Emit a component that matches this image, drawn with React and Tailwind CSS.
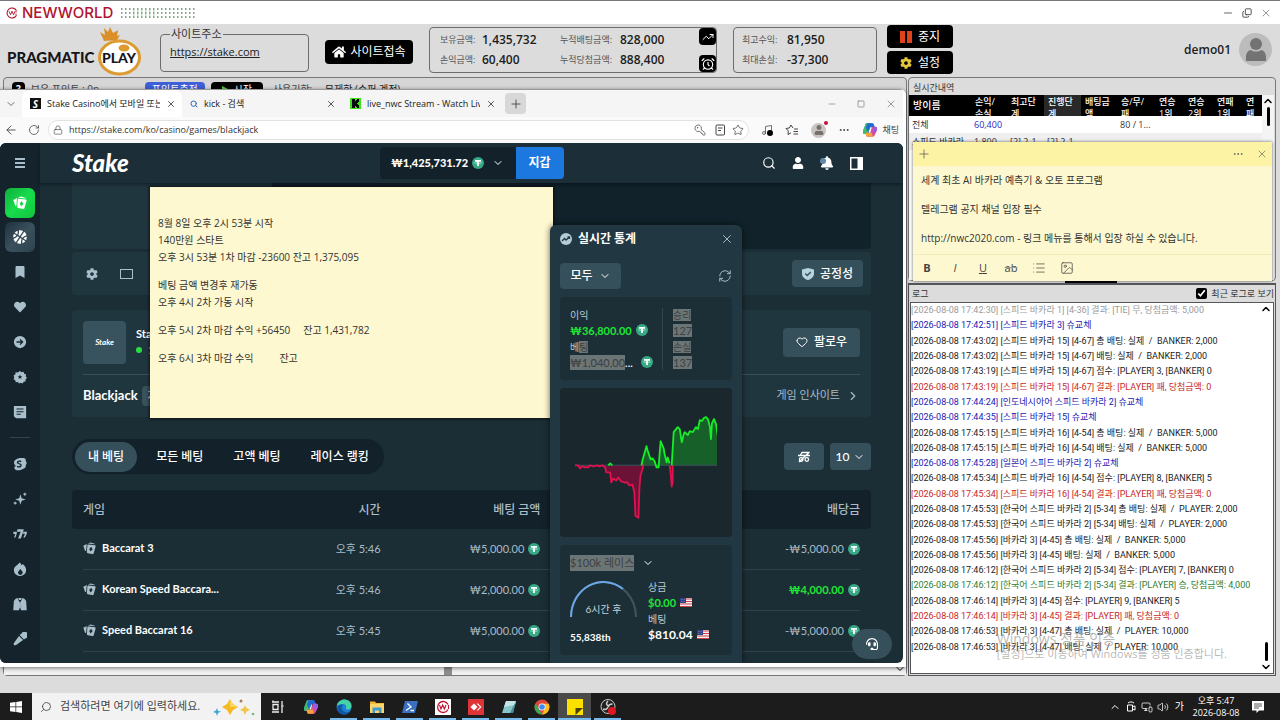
import React from "react";
import {
  ArrowLeft, ChevronDown, ChevronRight, ChevronUp, Ellipsis, Heart, KeyRound, List, Lock, Minus, Music,
  Plus, RotateCw, Search, Square, Star, X, Copy, TrendingUp, AlarmClock, RefreshCw, Image as ImageIcon, Volume2, MonitorSmartphone,
} from "lucide-react";
import { FaBookmark, FaCog, FaHeart, FaHome, FaUser, FaBell, FaHeadset, FaBasketballBall } from "react-icons/fa";

const ui = "font-['Open_Sans','Noto_Sans_CJK_KR',sans-serif]";
const stake = "font-['Lato','Noto_Sans_CJK_KR',sans-serif]";

function CardsIcon({ className }) {
  return (
    <svg viewBox="0 0 16 16" className={className} fill="currentColor" aria-hidden="true">
      <path d="M.4 4.600 4.600 2.400 3.900 10.800 2.600 11.200z" />
      <path d="M5.600 1.800 9.500.6l5 1.700.1.600-8.300-1z" />
      <path fillRule="evenodd" d="M6.400 3 14.600 4q1.200.2.900 1.400L13 14q-.3 1.200-1.500.9L5.800 13.700q-1.200-.2-1-1.400L5.400 3.800Q5.500 2.900 6.400 3zM10 5.800 7.600 8.700 9.300 11.800 11.900 9z" />
    </svg>
  );
}

function Tether({ className = "size-3" }) {
  return (
    <svg viewBox="0 0 16 16" className={`${className} shrink-0`} aria-hidden="true">
      <circle cx="8" cy="8" r="8" fill="#36a883" />
      <path d="M4 4h8v2.200H9.200V12H6.800V6.200H4z" fill="#fff" />
      <ellipse cx="8" cy="7.600" rx="4.600" ry="1.200" fill="none" stroke="#d8f5ea" strokeWidth=".7" />
    </svg>
  );
}

function Flag() {
  return (
    <svg viewBox="0 0 24 18" className="h-[9px] w-3 shrink-0" aria-hidden="true">
      <rect width="24" height="18" rx="1" fill="#f4eef0" />
      <path d="M0 2h24M0 7h24M0 12h24M0 17h24" stroke="#c9424d" strokeWidth="2" />
      <rect width="12" height="10" fill="#343f83" />
      <path d="M2 3h8M2 7h8" stroke="#a9b0dd" strokeWidth="1" strokeDasharray="1.5 1.5" />
    </svg>
  );
}

function NwMark({ className }) {
  return (
    <svg viewBox="0 0 24 24" className={className} fill="none" stroke="#b0122f" strokeWidth="2.2" aria-hidden="true">
      <path d="M21 7.500A10 10 0 1 0 21 16.500" />
      <path d="M6 8.500l3 7 3-7 3 7 3-7M20 8v3M20 13v3" strokeWidth="1.8" />
    </svg>
  );
}

function CopilotIcon({ className }) {
  return (
    <svg viewBox="0 0 24 24" className={className} aria-hidden="true">
      <path d="M8 2h7c2 0 2.500 1 3 3l1 3h-6l-2 7c-.5 2-1 3-3 3H4c-3 0-3-3-2-6l3-8c.5-1.300 1.500-2 3-2z" fill="#2b8fe0" />
      <path d="M2 12l3-8c.5-1.300 1.500-2 3-2h5L9 15c-.5 2-1 3-3 3H4c-3 0-3-3-2-6z" fill="#3fb96a" />
      <path d="M8 2h7c2 0 2.500 1 3 3l1 3h-7l-3 7L6 9z" fill="#2468d4" />
      <path d="M16 22H9c-2 0-2.500-1-3-3l-1-3h7l2-6c.6-2 1-3 3-3h3c3 0 3 3 2 6l-3 7c-.5 1.300-1.500 2-3 2z" fill="#d94f9b" />
      <path d="M16 22H9c-2 0-2.500-1-3-3l-1-3h7l3 0z" fill="#f2a33a" />
      <path d="M17 7h3c3 0 3 3 2 6l-2 4-4-5z" fill="#9a5ae6" />
      <path d="M10 15l3-7h1l-2 8z" fill="#fff" />
    </svg>
  );
}

/* ---------- trading console ---------- */

function TitleBar() {
  return (
    <header className="flex h-6 items-center border-t border-[#77777b] bg-white pl-1.5">
      <NwMark className="size-3" />
      <h1 className="ml-1 font-['Inter',sans-serif] text-[15px] leading-none font-medium text-[#b0122f]">NEWWORLD</h1>
      <svg className="ml-2 h-2.5 w-[74px]" aria-hidden="true">
        <g strokeWidth="1.5" strokeDasharray="1.5 2.5">
          <path d="M0 1h74M0 5h74M0 9h74" stroke="#5d8a62" />
          <path d="M12 3h24M12 7h24" stroke="#a9dcae" />
        </g>
      </svg>
      <div className="ml-auto flex items-center gap-2 pr-2 text-[#333]">
        <button aria-label="최소화"><Minus className="size-3" strokeWidth={1.5} /></button>
        <button aria-label="이전 크기로"><Copy className="size-2.5 -scale-x-100 rotate-180" strokeWidth={2} /></button>
        <button aria-label="닫기" className="text-[#777]"><X className="size-3" strokeWidth={1.5} /></button>
      </div>
    </header>
  );
}

function PragmaticLogo() {
  return (
    <svg viewBox="0 0 137 52" className="h-[52px] w-[137px]" role="img" aria-label="Pragmatic Play">
      <path d="M97 17 93 8l5 3-1-7 4 4 2-5 3 6 5-3-1 6 3-1-3 5z" fill="#d99127" />
      <ellipse cx="112.500" cy="33.500" rx="20" ry="16.500" fill="#fff" stroke="#dd9a2e" strokeWidth="3" />
      <ellipse cx="117" cy="24" rx="5.500" ry="3.500" fill="#dd9a2e" />
      <text x="0" y="39" fontFamily="Lato, sans-serif" fontWeight="900" fontSize="15" fill="#17161a">PRAGMATIC</text>
      <text x="95" y="39" fontFamily="Lato, sans-serif" fontWeight="900" fontSize="14" fill="#17161a">PLAY</text>
    </svg>
  );
}

function Stat({ label, value }) {
  return (
    <>
      <dt className="text-[9px] text-[#555]">{label}</dt>
      <dd className="text-xs font-semibold text-[#1c1c1c]">{value}</dd>
    </>
  );
}

function ConsoleHeader() {
  return (
    <section className="flex h-[53px] shrink-0 items-start gap-4 pl-[7px]">
      <PragmaticLogo />
      <fieldset className="mt-[2px] h-[46px] w-[149px] shrink-0 rounded-sm border border-[#6d6d6d] px-[9px]">
        <legend className="px-px text-[11px] leading-4 text-[#333]">사이트주소</legend>
        <a href="https://stake.com" className="block text-[11px] leading-5 text-[#222] underline">https://stake.com</a>
      </fieldset>
      <button className="mt-4 flex h-6 w-[88px] shrink-0 items-center justify-center gap-1 rounded bg-black text-xs text-white">
        <FaHome className="size-3.5" />사이트접속
      </button>
      <div className="mt-[3px] flex h-[46px] w-[288px] shrink-0 justify-between rounded-sm border border-[#6d6d6d] pl-2.5">
        <dl className="grid grid-cols-[42px_78px_60px_auto] content-center items-center leading-5">
          <Stat label="보유금액:" value="1,435,732" />
          <Stat label="누적배팅금액:" value="828,000" />
          <Stat label="손익금액:" value="60,400" />
          <Stat label="누적당첨금액:" value="888,400" />
        </dl>
        <div className="flex flex-col justify-between">
          <button aria-label="차트" className="grid size-[17px] place-items-center rounded-sm bg-black text-white"><TrendingUp className="size-3" /></button>
          <button aria-label="알람" className="grid size-[17px] place-items-center rounded-sm bg-black text-white"><AlarmClock className="size-3.5" /></button>
        </div>
      </div>
      <div className="flex shrink-0 gap-2.5">
        <dl className="mt-[3px] grid h-[46px] w-[144px] grid-cols-[45px_auto] content-center items-center rounded-sm border border-[#6d6d6d] pl-2 leading-5">
          <Stat label="최고수익:" value="81,950" />
          <Stat label="최대손실:" value="-37,300" />
        </dl>
        <div className="mt-px flex w-[66px] flex-col gap-[3px] text-xs text-white">
          <button className="flex h-[23px] items-center justify-center gap-1.5 rounded bg-black">
            <svg viewBox="0 0 12 12" className="size-3" fill="#e0431b" aria-hidden="true"><path d="M0 0h5v12H0zM7 0h5v12H7z" /></svg>중지
          </button>
          <button className="flex h-[23px] items-center justify-center gap-1.5 rounded bg-black">
            <FaCog className="size-3 text-[#e5c53a]" />설정
          </button>
        </div>
      </div>
      <div className="ml-auto flex shrink-0 items-center gap-2 pt-[9px] pr-2">
        <span className="text-xs font-semibold text-[#1c1c1c]">demo01</span>
        <span className="grid size-[33px] place-items-center rounded-full bg-[#bcbcbc]">
          <svg viewBox="0 0 20 24" className="h-6 w-5" fill="#737373" aria-hidden="true">
            <circle cx="10" cy="6" r="6" /><path d="M0 23v-4c0-4 2.500-7 5-7 2 2 8 2 10 0 2.500 0 5 3 5 7v4z" />
          </svg>
        </span>
      </div>
    </section>
  );
}

function BackPanel() {
  return (
    <section className="mb-[17px] ml-[3px] flex flex-1 flex-col justify-between rounded-sm border border-[#77777b] bg-[#d6d6d6]">
      <div className="flex items-start gap-1.5 pt-1 pl-2 text-[10px]">
        <span className="rounded-sm bg-black px-1 font-bold text-white">?</span>
        <span className="w-[108px] text-[#444]">보유 포인트 : 0p</span>
        <button className="w-[60px] rounded bg-[#3f5fd8] text-white">포인트충전</button>
        <button className="flex w-[52px] items-center justify-center gap-1 rounded bg-black text-white">
          <svg viewBox="0 0 8 8" className="size-2" fill="#4fd03a" aria-hidden="true"><path d="M0 0l8 4-8 4z" /></svg>시작
        </button>
        <span className="ml-1 w-[46px] text-[#444]">사용기한:</span>
        <span className="text-[#222]">무제한 (슈퍼 계정)</span>
      </div>
      <div className="flex h-3 items-center bg-[#f1f1f1]">
        <span className="ml-auto h-full w-2 bg-[#8e8e8e]" />
        <span className="h-full w-[49%]" />
        <ChevronDown className="size-3 text-black" />
      </div>
    </section>
  );
}

const roomHeads = [["방이름", ""], ["손익/", "손실"], ["최고단", "계"], ["진행단", "계"], ["배팅금", "액"], ["승/무/", "패"], ["연승", "1위"], ["연승", "2위"], ["연패", "1위"], ["연", "패"]];

function RoomTable() {
  return (
    <section className="flex h-[204px] shrink-0 flex-col rounded-sm border border-[#77777b] bg-[#dcdcdc] pr-px">
      <h2 className="h-[17px] pt-1 pl-1 text-[9px] leading-3 text-[#333]">실시간내역</h2>
      <div className="flex min-h-0 flex-1 bg-white">
        <div className="min-w-0 flex-1 overflow-hidden">
          <table className="w-full table-fixed border-collapse text-left text-[9px]">
            <colgroup>
              <col className="w-[62px]" /><col className="w-9" /><col className="w-[37px]" /><col className="w-[37px]" /><col className="w-9" />
              <col className="w-[38px]" /><col className="w-[29px]" /><col className="w-[29px]" /><col className="w-[29px]" /><col />
            </colgroup>
            <thead>
              <tr className="bg-black text-white">
                {roomHeads.map((h, i) => (
                  <th key={i} className={`p-0 pl-1 font-medium ${i === 3 ? "bg-[#292929]" : ""}`}>
                    {i === 0
                      ? <div className="text-[10px] leading-[21px]">{h[0]}</div>
                      : <div className="h-[21px] overflow-hidden pt-px text-[9px] leading-3">{h[0]}<br />{h[1]}</div>}
                  </th>
                ))}
              </tr>
            </thead>
            <tbody className="text-[#333]">
              <tr className="h-[17px]">
                <td className="pl-[3px]">전체</td><td className="pl-[3px] text-[#2a1fc0]">60,400</td><td /><td /><td /><td className="pl-[3px] whitespace-nowrap">80 / 1...</td><td /><td /><td /><td />
              </tr>
              <tr className="h-[17px] bg-[#efefef] whitespace-nowrap">
                <td className="pl-[3px]">스피드 바카라</td><td className="pl-[3px]">1,800</td><td className="pl-[3px]">[2] 2-1</td><td className="pl-[3px]">[2] 2-1</td><td /><td /><td /><td /><td /><td />
              </tr>
            </tbody>
          </table>
        </div>
        <div className="flex w-3 flex-col items-center bg-[#f4f4f4]">
          <ChevronUp className="size-3 text-black" strokeWidth={3} />
          <span className="h-[19px] w-[3px] rounded bg-black" />
        </div>
      </div>
    </section>
  );
}

const K = "text-[#222]", B = "text-[#1a1ab4]", R = "text-[#c62828]", G = "text-[#2e7d32]", L = "text-[#9b9b9b]";
const logs = [
  [L, "[2026-08-08 17:42:30] [스피드 바카라 1] [4-36] 결과: [TIE] 무, 당첨금액: 5,000"],
  [B, "[2026-08-08 17:42:51] [스피드 바카라 3] 슈교체"],
  [K, "[2026-08-08 17:43:02] [스피드 바카라 15] [4-67] 총 배팅: 실제  /  BANKER: 2,000"],
  [K, "[2026-08-08 17:43:02] [스피드 바카라 15] [4-67] 배팅: 실제  /  BANKER: 2,000"],
  [K, "[2026-08-08 17:43:19] [스피드 바카라 15] [4-67] 점수: [PLAYER] 3, [BANKER] 0"],
  [R, "[2026-08-08 17:43:19] [스피드 바카라 15] [4-67] 결과: [PLAYER] 패, 당첨금액: 0"],
  [B, "[2026-08-08 17:44:24] [인도네시아어 스피드 바카라 2] 슈교체"],
  [B, "[2026-08-08 17:44:35] [스피드 바카라 15] 슈교체"],
  [K, "[2026-08-08 17:45:15] [스피드 바카라 16] [4-54] 총 배팅: 실제  /  BANKER: 5,000"],
  [K, "[2026-08-08 17:45:15] [스피드 바카라 16] [4-54] 배팅: 실제  /  BANKER: 5,000"],
  [B, "[2026-08-08 17:45:28] [일본어 스피드 바카라 2] 슈교체"],
  [K, "[2026-08-08 17:45:34] [스피드 바카라 16] [4-54] 점수: [PLAYER] 8, [BANKER] 5"],
  [R, "[2026-08-08 17:45:34] [스피드 바카라 16] [4-54] 결과: [PLAYER] 패, 당첨금액: 0"],
  [K, "[2026-08-08 17:45:53] [한국어 스피드 바카라 2] [5-34] 총 배팅: 실제  /  PLAYER: 2,000"],
  [K, "[2026-08-08 17:45:53] [한국어 스피드 바카라 2] [5-34] 배팅: 실제  /  PLAYER: 2,000"],
  [K, "[2026-08-08 17:45:56] [바카라 3] [4-45] 총 배팅: 실제  /  BANKER: 5,000"],
  [K, "[2026-08-08 17:45:56] [바카라 3] [4-45] 배팅: 실제  /  BANKER: 5,000"],
  [K, "[2026-08-08 17:46:12] [한국어 스피드 바카라 2] [5-34] 점수: [PLAYER] 7, [BANKER] 0"],
  [G, "[2026-08-08 17:46:12] [한국어 스피드 바카라 2] [5-34] 결과: [PLAYER] 승, 당첨금액: 4,000"],
  [K, "[2026-08-08 17:46:14] [바카라 3] [4-45] 점수: [PLAYER] 9, [BANKER] 5"],
  [R, "[2026-08-08 17:46:14] [바카라 3] [4-45] 결과: [PLAYER] 패, 당첨금액: 0"],
  [K, "[2026-08-08 17:46:53] [바카라 3] [4-47] 총 배팅: 실제  /  PLAYER: 10,000"],
  [K, "[2026-08-08 17:46:53] [바카라 3] [4-47] 배팅: 실제  /  PLAYER: 10,000"],
];

function LogPanel() {
  return (
    <section className="flex min-h-0 flex-1 flex-col border border-t-2 border-[#55555a] bg-[#dcdcdc] px-px pb-px">
      <div className="flex h-[17px] shrink-0 items-center justify-between pl-0.5 text-[9px] text-[#333]">
        <h2>로그</h2>
        <label className="flex items-center gap-1">
          <input type="checkbox" defaultChecked className="size-[11px] accent-black" />최근 로그로 보기
        </label>
      </div>
      <div className="flex min-h-0 flex-1 border border-[#55555a] bg-white">
        <ul className="flex min-w-0 flex-1 flex-col pb-[18px] font-['Roboto','Noto_Sans_CJK_KR',sans-serif] text-[9px] whitespace-pre">
          {logs.map(([c, t], i) => <li key={i} className={`flex flex-1 items-center leading-none ${c}`}>{t}</li>)}
        </ul>
        <div className="flex w-3.5 flex-col items-center">
          <ChevronUp className="size-3 text-black" strokeWidth={3} />
          <span className="mt-auto h-[19px] w-[3px] rounded bg-black" />
          <ChevronDown className="size-3 text-black" strokeWidth={3} />
        </div>
      </div>
    </section>
  );
}

/* ---------- browser ---------- */

function Tab({ active, icon, title, width }) {
  return (
    <div className={`flex h-[27px] items-center gap-1.5 pr-1.5 pl-2 ${width} ${active ? "rounded-t-lg bg-white" : ""}`}>
      {icon}
      <span className="min-w-0 flex-1 overflow-hidden text-[9px] whitespace-nowrap text-[#222]">{title}</span>
      <button aria-label="탭 닫기"><X className="size-2.5 text-[#333]" /></button>
    </div>
  );
}

function BrowserChrome() {
  return (
    <div className="shrink-0 border-t border-[#9a9a9a] bg-[#f5f5f5]">
      <div className="flex h-[27px] items-center">
        <button aria-label="탭 목록" className="grid h-full w-[22px] place-items-center"><ChevronDown className="size-3 text-[#444]" strokeWidth={1.5} /></button>
        <Tab active width="w-[160px]" title="Stake Casino에서 모바일 또는 데스" icon={
          <span className="grid size-[11px] place-items-center bg-[#111] text-[10px] leading-none font-bold text-white italic">S</span>} />
        <Tab width="w-[160px]" title="kick - 검색" icon={<Search className="size-2 text-[#2a66b8]" strokeWidth={3} />} />
        <Tab width="w-[160px]" title="live_nwc Stream - Watch Live on Kick" icon={
          <svg viewBox="0 0 11 11" className="size-[11px] shrink-0" aria-hidden="true"><rect width="11" height="11" fill="#3fe01d" /><path d="M2 1h3v2h1V2h1V1h2v3H8v1H7v1h1v1h1v3H7V9H6V8H5v2H2z" fill="#0a0a0a" /></svg>} />
        <button aria-label="새 탭" className="ml-[3px] grid size-[21px] place-items-center rounded bg-[#d8d8d8]"><Plus className="size-3.5 text-[#444]" strokeWidth={1.5} /></button>
        <div className="ml-auto flex items-center gap-5 pr-1.5 text-[#777]">
          <button aria-label="최소화"><Minus className="size-2.5" strokeWidth={1.5} /></button>
          <button aria-label="최대화"><Square className="size-2" strokeWidth={2} /></button>
          <button aria-label="닫기"><X className="size-3" strokeWidth={1.5} /></button>
        </div>
      </div>
      <div className="flex h-[26px] items-center bg-[#fafafa] pl-1 text-[#444]">
        <button aria-label="뒤로"><ArrowLeft className="size-3.5" strokeWidth={1.5} /></button>
        <button aria-label="새로 고침" className="ml-2.5"><RotateCw className="size-3" strokeWidth={1.5} /></button>
        <div className="ml-2 flex h-5 flex-1 items-center gap-1.5 rounded-full border border-[#e2e2e2] bg-white px-1">
          <Lock className="size-2.5" strokeWidth={1.5} />
          <input aria-label="주소" defaultValue="https://stake.com/ko/casino/games/blackjack" className="min-w-0 flex-1 bg-transparent text-[9px] text-[#333] outline-none" />
          <KeyRound className="size-3 -scale-x-100" strokeWidth={1.5} />
          <svg viewBox="0 0 12 12" className="ml-0.5 size-3" fill="none" stroke="currentColor" aria-hidden="true"><rect x="2" y="1" width="8.5" height="10" rx="1" /><path d="M4 4h4.500M4 6.500h3" /></svg>
          <Star className="size-3" strokeWidth={1.5} />
        </div>
        <div className="ml-3 flex items-center gap-3">
          <span className="relative"><Music className="size-3" strokeWidth={1.5} /><span className="absolute right-0 bottom-0 size-1.5 rounded-full bg-black" /></span>
          <svg viewBox="0 0 14 12" className="h-3 w-3.5" fill="none" stroke="currentColor" aria-hidden="true"><path d="M8 4 6 1 4.300 4 1 4.500l2.300 2.400L3 10.500l3-1.600M9 5h4M8.500 7.500H13M8.500 10H13" /></svg>
          <span className="relative grid size-[15px] place-items-center rounded-full bg-[#c9c5c2]"><FaUser className="size-2.5 text-[#77716d]" /><span className="absolute -top-0.5 -right-0.5 size-1 rounded-full bg-[#c4123d]" /></span>
          <Ellipsis className="size-3" />
          <CopilotIcon className="size-4" />
        </div>
        <span className="ml-1 pr-1 text-[9px] text-[#444]">채팅</span>
      </div>
    </div>
  );
}

function Svg({ children }) {
  return <svg viewBox="0 0 16 16" className="size-3.5 text-[#a9bfcb]" fill="currentColor" aria-hidden="true">{children}</svg>;
}

function Sidebar() {
  const upper = [
    ["북마크", <FaBookmark className="h-3 w-3.5 text-[#a9bfcb]" />],
    ["즐겨찾기", <FaHeart className="size-3 text-[#a9bfcb]" />],
    ["최근", <Svg><path fillRule="evenodd" d="M8 1a7 7 0 1 0 0 14A7 7 0 0 0 8 1zM4 7.200h5L7.500 5.500l1-1L12 8l-3.500 3.500-1-1L9 8.800H4z" /></Svg>],
    ["챌린지", <Svg><path fillRule="evenodd" d="M8 1l1.800 1.500L12 2l.8 2.200 2.200.8-.5 2.200L16 9l-1.700 1.600.2 2.200-2.300.5L11 15.300 8.800 14.500 7 15.500l-1.500-1.700-2.300.2-.6-2.300L.6 10.500 1.500 8.300.6 6.200l2-1.200.4-2.300 2.300.2zM8 5.200 7.200 7H5.400l1.400 1.300-.5 2L8 9.200l1.700 1.100-.5-2L10.600 7H8.800z" /></Svg>],
    ["내 베팅", <Svg><path fillRule="evenodd" d="M1 1h14v14H3.500L1 12.800zM4 4v1.200h8V4zm0 3v1.200h8V7zm0 3v1.200h5V10z" /></Svg>],
  ];
  const lower = [
    ["스테이크 오리지널", <Svg><path fillRule="evenodd" d="M9 1h3c2 0 3 1.500 2.500 3.500C16 6 16 8 14.500 9c.5 2-.5 3.500-2 4L8 15c-4 1-7-1-6.500-4l2-.5C1 8 0 5 3 3c1.500-1.500 4-2 6-2zM8 4C5 4 3.500 6 5 7.500l3 1.300c1.500 1-1 2.500-3 1.200l-.7 1.400C7 13 11 11.500 9.700 8.500 9 7 5.500 7 6 6c.5-1 2-.7 3 0l.7-1.500C9 4 8.500 4 8 4z" /></Svg>],
    ["스테이크 독점", <Svg><path d="M8.500 2.500 9.900 7l4.600 1.500-4.600 1.500-1.400 4.500L7.100 10 2.500 8.500 7.100 7z" /><path d="M13.500.8v3.400M11.800 2.500h3.400M2.500 11v3.400M.8 12.700h3.400" stroke="currentColor" strokeWidth="1.300" /></Svg>],
    ["슬롯", <Svg><path d="M5 2.500h7.200l-.4 2.300L9 13H5.800l3-7.500H4.500zM.6 5.500H4.500L4 8.500 2.800 12H1.200l1.400-4H.3zM12 5.500h4l-.4 2.500-2 4H11.800l2-4.200h-2.600z" /></Svg>],
    ["인기", <Svg><path fillRule="evenodd" d="M7.500.5c1.200.8 2 2 2.300 3.200.6-.3 1-.8 1.200-1.400 2.500 1.700 4 4.200 4 7A6.800 6.800 0 0 1 8 16a6.800 6.800 0 0 1-7-6.700C1 5.800 3.500 4.500 5 3.200 6 2.400 7 1.500 7.500.5zM8.300 8 6.300 10.500a2.600 2.600 0 1 0 4.200 0z" /></Svg>],
    ["라이브 카지노", <Svg><path d="M1 4.500 3 2l2.300-.8L7 5v10H.3zM15 4.500 13 2l-2.300-.8L9 5v10h6.700zM6 1h4L9 3.500H7zM7.400 5h1.200l.8 6L8 14l-1.400-3z" /></Svg>],
    ["게임쇼", <Svg><path d="M9.500 2a4 4 0 1 1 4.500 5.500l-1.500 1L7.500 3.500zM6.800 4.500l4.700 4.700L4 14.500l-2 1-1.500-1.500 1-2z" /></Svg>],
  ];
  return (
    <nav className="flex w-10 shrink-0 flex-col items-center bg-[#15242c] pt-3.5">
      <button aria-label="메뉴">
        <svg viewBox="0 0 12 12" className="h-3 w-2.5" aria-hidden="true" preserveAspectRatio="none"><path d="M0 2h12M0 6h12M0 10h12" stroke="#a9bfcb" strokeWidth="2" /></svg>
      </button>
      <a href="#casino" aria-label="카지노" className="mt-[19px] grid size-[30px] shrink-0 place-items-center rounded-md bg-linear-to-br from-[#0fae3c] via-[#17dc4c] to-[#12c541]"><CardsIcon className="size-3.5 text-white" /></a>
      <a href="#sports" aria-label="스포츠" className="mt-1 grid size-[30px] shrink-0 place-items-center rounded-md bg-linear-to-br from-[#1d323d] via-[#3a505c] to-[#2d444f]"><FaBasketballBall className="size-3.5 -rotate-12 text-white" /></a>
      <div className="mt-[2px] flex flex-col">
        {upper.map(([l, ic]) => <a key={l} href="#menu" aria-label={l} className="grid h-[35px] w-10 place-items-center">{ic}</a>)}
      </div>
      <hr className="mt-2 w-5 border-[#2f4552]" />
      <div className="mt-2 flex flex-col">
        {lower.map(([l, ic]) => <a key={l} href="#menu" aria-label={l} className="grid h-[35px] w-10 place-items-center">{ic}</a>)}
      </div>
    </nav>
  );
}

function StakeHeader() {
  return (
    <div className="z-10 grid h-10 shrink-0 grid-cols-[1fr_auto_1fr] items-center bg-[#1c2f38] px-8 shadow-[0_2px_3px_#0005]">
      <a href="#home" className="text-[24px] leading-none font-black text-white italic">Stake</a>
      <div className="flex h-8 overflow-hidden rounded">
        <button className="flex w-[136px] items-center justify-center gap-1 bg-[#13212a] text-[11px] font-black text-white">
          ₩1,425,731.72 <Tether /> <ChevronDown className="ml-1 size-3" />
        </button>
        <button className="w-12 bg-[#1c78df] text-xs font-bold text-white">지갑</button>
      </div>
      <div className="flex items-center justify-end gap-4 pr-2 text-white">
        <button aria-label="검색"><Search className="size-3.5" /></button>
        <button aria-label="프로필"><FaUser className="size-3" /></button>
        <button aria-label="알림" className="relative"><FaBell className="size-3.5" /><span className="absolute top-0.5 left-0 size-1.5 rounded-full bg-[#5f87a8]" /></button>
        <button aria-label="채팅"><svg viewBox="0 0 13 13" className="size-[13px]" aria-hidden="true"><path fillRule="evenodd" fill="currentColor" d="M0 0h13v13H0zM1.500 1.500v10H7.500v-10z" /></svg></button>
      </div>
    </div>
  );
}

const bets = [
  ["Baccarat 3", "오후 5:46", "₩5,000.00", "-₩5,000.00", false],
  ["Korean Speed Baccara...", "오후 5:46", "₩2,000.00", "₩4,000.00", true],
  ["Speed Baccarat 16", "오후 5:45", "₩5,000.00", "-₩5,000.00", false],
];

const cell = "flex h-[41px] items-center gap-1 border-b border-[#2d424c]";

function BetsTable() {
  return (
    <table className="mt-4 w-full table-fixed border-collapse text-[11px] text-[#a9bcc7]">
      <thead>
        <tr className="h-[39px] text-xs font-medium">
          <th className="rounded-l bg-[#13212a] px-[11px] text-left font-medium">게임</th>
          <th className="bg-[#13212a] px-[11px] text-right font-medium">시간</th>
          <th className="bg-[#13212a] px-[11px] text-right font-medium">베팅 금액</th>
          <th className="bg-[#13212a]" />
          <th className="rounded-r bg-[#13212a] px-[11px] text-right font-medium">배당금</th>
        </tr>
      </thead>
      <tbody>
        {bets.map(([g, t, a, p, win]) => (
          <tr key={g}>
            <td className="p-0"><div className={`${cell} ml-[11px] gap-1.5 pb-0.5 font-bold whitespace-nowrap text-white`}><CardsIcon className="size-[13px] shrink-0 text-[#a9bfcb]" />{g}</div></td>
            <td className="p-0"><div className={`${cell} justify-end pr-[11px]`}>{t}</div></td>
            <td className="p-0"><div className={`${cell} justify-end pr-[11px]`}>{a}<Tether /></div></td>
            <td className="p-0"><div className={cell} /></td>
            <td className="p-0"><div className={`${cell} mr-[11px] justify-end ${win ? "font-bold text-[#1fe535]" : ""}`}>{p}<Tether /></div></td>
          </tr>
        ))}
      </tbody>
    </table>
  );
}

const btn = "flex items-center justify-center rounded bg-[#36505b] text-xs font-medium text-white";

function GamePage() {
  return (
    <main className="min-h-0 flex-1 overflow-hidden px-8">
      <div className="flex h-[66px] overflow-hidden rounded-b bg-[#20363f]">
        <div className="w-1/4" /><div className="flex-1 bg-[#11222a]" />
      </div>
      <div className="mt-[3px] flex h-[43px] items-center rounded bg-[#20363f] pr-2 pl-3.5 text-[#a9bfcb]">
        <button aria-label="설정"><FaCog className="size-3" /></button>
        <button aria-label="극장 모드" className="ml-[22px] h-2.5 w-[13px] border border-current" />
        <button className={`${btn} ml-auto h-[27px] w-[71px] gap-1.5`}>
          <svg viewBox="0 0 12 12" className="size-3 text-[#b6d3e0]" fill="currentColor" aria-hidden="true"><path fillRule="evenodd" d="M0 1.500 6 0l6 1.500V6c0 3-3 5.200-6 6-3-.8-6-3-6-6zM5.300 8.500l4-4-1-1-3 3-1.500-1.500-1 1z" /></svg>공정성
        </button>
      </div>
      <div className="mt-[15px] h-[107px] rounded bg-[#20363f] px-[11px]">
        <div className="flex h-[65px] items-center border-b border-[#38505b]">
          <span className="grid size-[43px] place-items-center rounded bg-[#38525e] text-[8px] font-bold text-white italic">Stake</span>
          <div className="ml-2.5 text-[11px] leading-4 text-white"><b>Stake Originals</b>
            <p className="flex items-center gap-1.5"><span className="size-1.5 rounded-full bg-[#2ade3f]" />1,024</p></div>
          <button className={`${btn} ml-auto h-[29px] w-[77px] gap-1.5`}><Heart className="size-3" />팔로우</button>
        </div>
        <div className="flex h-[41px] items-center text-xs">
          <b className="text-[13px] text-white">Blackjack</b>
          <span className="ml-1 rounded bg-[#38525e] px-1.5 text-[11px] leading-5 text-white">게임</span>
          <a href="#insight" className="ml-auto flex items-center gap-1.5 text-[11px] text-[#a9bcc7]">게임 인사이트 <ChevronRight className="size-3.5" /></a>
        </div>
      </div>
      <div className="mt-[22px] flex items-center">
        <div className="flex h-[35px] items-center rounded-full bg-[#13212a] px-[3px] text-xs font-medium text-white">
          <button className="h-[30px] rounded-full bg-[#36505b] px-[13px]">내 베팅</button>
          <button className="px-[19px]">모든 베팅</button>
          <button className="px-[11px]">고액 베팅</button>
          <button className="pr-3 pl-[19px]">레이스 랭킹</button>
        </div>
        <button aria-label="숨김 모드" className={`${btn} ml-auto h-[27px] w-10`}>
          <svg viewBox="0 0 14 12" className="h-3 w-3.5" fill="none" stroke="currentColor" strokeWidth="1.3" aria-hidden="true"><path d="M3.500 4 5 1.500h6L10.500 4M1 4.500h12M2 11 12.500 1" /><circle cx="4.200" cy="8.500" r="1.800" /><circle cx="9.800" cy="8.500" r="1.800" /></svg>
        </button>
        <button className={`${btn} ml-1.5 h-[27px] w-[41px] gap-1`}>10<ChevronDown className="size-3" /></button>
      </div>
      <BetsTable />
    </main>
  );
}

const redLine = "M0 52l3 0 2 3 2-2 3 1 3 0 2-2 3 1 4-1 2 1 3-1 3 2 1 5 4 0 1 10 2-4 3 2 2-3 3 4 3 1 3 0 2 3 3-1 2 8 1 23 3 2 1-30 1-12 2-6 1-6";
const greenLine = "M66 52l1-5 4-14 1 4 3 9 2-1 2 3 2 6 2 0 2-26 3 7 1 6 2 8 1-5 2 6";
const greenLine2 = "M96 52l2-33 4-5 2 2 2 13 2-8 1-2 3 3 2-4 3 1 3-5 2 2 2-9 2 1 2-3 2-1 2 2 2 8 1 12 1-16 2-4 2 5 2 13 1-10 3 5 2 3";

function LiveStats() {
  const mark = "bg-[#6c7575] text-[#3c4244]";
  return (
    <aside className="absolute top-[82px] bottom-0 left-[550px] z-20 w-48 overflow-hidden rounded-t-md bg-[#213842] px-2.5 text-[11px] text-white shadow-[0_0_6px_#0009]">
      <div className="flex h-7 items-center gap-1.5">
        <svg viewBox="0 0 12 12" className="size-3" aria-hidden="true"><circle cx="6" cy="6" r="6" fill="#b6cbd5" /><path d="M2 8l2.500-2.500L6 7l3.500-3M7.500 4h2v2" fill="none" stroke="#213842" strokeWidth="1.300" /></svg>
        <h2 className="text-xs font-bold">실시간 통계</h2>
        <button aria-label="닫기" className="-mr-0.5 ml-auto"><X className="size-3.5 text-[#b6cbd5]" strokeWidth={1.5} /></button>
      </div>
      <div className="mt-2.5 flex items-center justify-between">
        <button className={`${btn} h-[26px] w-[61px] gap-1.5`}>모두<ChevronDown className="size-3" /></button>
        <RefreshCw className="size-3.5 text-[#b6cbd5]" strokeWidth={1.5} />
      </div>
      <div className="mt-2 flex h-[83px] items-center rounded bg-[#1c2f37] pl-2.5 leading-[15px]">
        <dl className="w-[93px] border-r border-[#2f454f]">
          <dt className="text-[10px] text-[#b6cbd5]">이익</dt>
          <dd className="flex items-center gap-1 font-bold text-[#1fe535]">₩36,800.00<Tether /></dd>
          <dt className="mt-[2px] text-[10px] text-[#b6cbd5]">베<span className={mark}>팅</span></dt>
          <dd className="flex items-center font-medium"><span className={mark}>₩1,040,00</span><span>...</span><Tether className="ml-2 size-3" /></dd>
        </dl>
        <dl className="ml-2.5">
          <dt className="text-[10px]"><span className={mark}>승리</span></dt>
          <dd><span className={mark}>127</span></dd>
          <dt className="mt-[2px] text-[10px]"><span className={mark}>손실</span></dt>
          <dd><span className={mark}>137</span></dd>
        </dl>
      </div>
      <div className="mt-2 rounded bg-[#1a272d] px-[15px] pt-[25px] pb-[15px]">
        <svg viewBox="0 0 141 108" className="block w-full" fill="none" strokeWidth="1.8" strokeLinejoin="round" aria-label="손익 차트">
          <path d={`${redLine}V52H0z`} fill="#6b1236" />
          <path d={`${greenLine}V52H66z`} fill="#17602a" />
          <path d={`${greenLine2}V52H96z`} fill="#17602a" />
          <path d="M0 52h141" stroke="#3a525c" strokeWidth="1" />
          <path d={redLine} stroke="#e0114f" />
          <path d="M94 52l1 8 1 13 1-4 0-17" stroke="#e0114f" />
          <path d={greenLine} stroke="#16ee28" />
          <path d={greenLine2} stroke="#16ee28" />
          <path d="M33 52l2-2 2 2" stroke="#16ee28" />
        </svg>
      </div>
      <div className="mt-2 h-[110px] rounded bg-[#1c2f37] px-2.5 pt-2.5">
        <button className="flex items-center gap-2 leading-4"><span className={mark}>$100k 레이스</span><ChevronDown className="size-3" /></button>
        <div className="mt-2 flex gap-[11px]">
          <div className="w-[67px]">
            <div className="relative pt-0.5">
              <svg viewBox="0 0 67 38" className="block h-[38px] w-[67px]" fill="none" strokeWidth="2" aria-hidden="true">
                <path d="M1 36A32.500 35 0 0 1 66 36" stroke="#3f5661" />
                <path d="M1 36A32.500 35 0 0 1 53 8" stroke="#6ca6e6" />
              </svg>
              <span className="absolute inset-x-0 bottom-0.5 text-center text-[10px] text-[#c5d3da]">6시간 후</span>
            </div>
            <b className="mt-2.5 block text-[10px] leading-4">55,838th</b>
          </div>
          <dl className="text-[11px] leading-4">
            <dt className="text-[10px] text-[#b6cbd5]">상금</dt>
            <dd className="flex items-center gap-1 font-bold text-[#1fe535]">$0.00<Flag /></dd>
            <dt className="text-[10px] text-[#b6cbd5]">베팅</dt>
            <dd className="flex items-center gap-1 text-xs leading-4 font-bold">$810.04<Flag /></dd>
          </dl>
        </div>
      </div>
    </aside>
  );
}

function Browser() {
  return (
    <section className="absolute top-[89px] right-[374px] bottom-[53px] left-0 flex flex-col overflow-hidden rounded-tr-md bg-white pr-[3px] pb-1 shadow-[0_1px_4px_#0008]">
      <BrowserChrome />
      <div className={`relative flex min-h-0 flex-1 overflow-hidden rounded-md bg-[#1b2e36] ${stake}`}>
        <Sidebar />
        <div className="flex min-w-0 flex-1 flex-col">
          <StakeHeader />
          <GamePage />
        </div>
        <LiveStats />
        <button aria-label="지원" className="absolute right-[11px] bottom-1 z-30 grid h-[30px] w-10 place-items-center rounded-full bg-[#36505b] text-white"><FaHeadset className="size-3" /></button>
      </div>
    </section>
  );
}

/* ---------- sticky notes ---------- */

const memo = [
  ["8월 8일 오후 2시 53분 시작", "140만원 스타트", "오후 3시 53분 1차 마감 -23600 잔고 1,375,095"],
  ["베팅 금액 변경후 재가동", "오후 4시 2차 가동 시작"],
  ["오후 5시 2차 마감 수익 +56450     잔고 1,431,782"],
  ["오후 6시 3차 마감 수익          잔고"],
];

function MemoNote() {
  return (
    <article className="absolute top-[187px] left-[150px] flex h-[231px] w-[403px] flex-col gap-[11px] bg-[#fdf8cf] px-2 pt-7 text-[10px] leading-[17px] whitespace-pre text-[#333] shadow-[0_0_3px_1px_#0009]">
      {memo.map((g, i) => <div key={i}>{g.map((t) => <p key={t}>{t}</p>)}</div>)}
    </article>
  );
}

function NoticeNote() {
  return (
    <article className="absolute top-[142px] right-2 flex h-[139px] w-[359px] flex-col bg-[#fdf8cf] text-[#333] shadow-[0_0_3px_#0009]">
      <header className="flex h-6 items-center gap-3 bg-[#fdf3a5] px-1 text-[#555]">
        <button aria-label="새 메모"><Plus className="size-3.5" strokeWidth={1.25} /></button>
        <button aria-label="메뉴" className="ml-auto"><Ellipsis className="size-3" strokeWidth={1.5} /></button>
        <button aria-label="닫기"><X className="size-3" strokeWidth={1.25} /></button>
      </header>
      <div className="flex-1 border-b border-[#f2ecbc] px-2 text-[10px] leading-[29px]">
        <p>세계 최초 AI 바카라 예측기 &amp; 오토 프로그램</p>
        <p>텔레그램 공지 채널 입장 필수</p>
        <p>http://nwc2020.com - 링크 메뉴를 통해서 입장 하실 수 있습니다.</p>
      </div>
      <footer className="flex h-[26px] items-center text-[11px] text-[#444]">
        <button className="w-7 font-bold">B</button>
        <button className="w-7 italic">I</button>
        <button className="w-7 underline">U</button>
        <button className="w-7 line-through decoration-[#999]">ab</button>
        <button aria-label="목록" className="grid w-7 place-items-center"><List className="size-3.5" strokeWidth={1.25} /></button>
        <button aria-label="그림" className="grid w-7 place-items-center"><ImageIcon className="size-3.5" strokeWidth={1.25} /></button>
      </footer>
    </article>
  );
}

/* ---------- taskbar ---------- */

function TaskIcon({ label, open, active, children }) {
  return (
    <button aria-label={label} className={`flex h-full w-[33px] flex-col items-center justify-between pt-1.5 ${active ? "bg-[#4a4a4a]" : ""}`}>
      <svg viewBox="0 0 16 16" className="size-4" aria-hidden="true">{children}</svg>
      <span className={`h-0.5 ${active ? "w-full" : "w-[27px]"} ${open ? "bg-[#76b9ed]" : ""}`} />
    </button>
  );
}

function Taskbar() {
  return (
    <footer className="flex h-[27px] shrink-0 items-center bg-[#1c1c1c] text-white">
      <button aria-label="시작" className="grid h-full w-8 place-items-center">
        <svg viewBox="0 0 12 12" className="size-3" fill="#fff" aria-hidden="true"><path d="M0 1.800 5.500 1v4.600H0zM6.200.9 12 0v5.600H6.200zM0 6.300h5.500V11L0 10.200zM6.200 6.300H12V12l-5.800-.9z" /></svg>
      </button>
      <label className="flex h-full w-[229px] items-center gap-2 bg-[#f2f2f2] pl-2 text-[#333]">
        <Search className="size-3 -scale-x-100" strokeWidth={1.5} />
        <input aria-label="검색" placeholder="검색하려면 여기에 입력하세요." className="min-w-0 flex-1 bg-transparent text-[11px] outline-none placeholder:text-[#444]" />
        <svg viewBox="0 0 42 18" className="mr-1.5 h-[18px] w-[42px] shrink-0" aria-hidden="true">
          <path d="M17 1l3 5 5 3-5 3-3 5-3-5-5-3 5-3z" fill="#f5b921" /><path d="M17 1l3 5 5 3-8 0z" fill="#fbd65c" />
          <path d="M32 7l1.500 3L37 12l-3.500 1.500L32 17l-1.500-3.500L27 12l3.500-2z" fill="#f3c547" />
          <path d="M4 10l1 3 3 .5-3 1.500-1 3-1-3-3-1 3-1.500z" fill="#37a5d8" /><circle cx="28" cy="3" r="1.500" fill="#a97a55" /><circle cx="40" cy="16" r="1.300" fill="#7fb77a" />
        </svg>
      </label>
      <div className="flex h-full">
        <TaskIcon label="작업 보기"><path d="M2 3h7M2 13h7M3 1.500V3M3 5.500h5v5H3zM12 2v4M12 8v6M11 7h2.500" fill="none" stroke="#eee" strokeWidth="1.300" /></TaskIcon>
        <button aria-label="Copilot" className="flex w-[33px] justify-center pt-1.5"><CopilotIcon className="size-4" /></button>
        <TaskIcon label="Edge" open><circle cx="8" cy="8" r="7.500" fill="#1f7fd0" /><path d="M.7 7C2 2 6 .5 9 .6c4 .2 7 3.400 6.500 6.800-.3 2-2 3.200-4 3-1.500 0-2-1-1.300-2C10.500 6.500 9 5 7 5 4 5 1.500 6 .7 7z" fill="#45d2a5" /><path d="M1 9c1-3 4-4 6-3.500-2 1.500-2 6 2 7.500 2 .8 4 0 5-.7C12 16 8 16 6 15.200 3 14.200 1 12 1 9z" fill="#1256a8" /></TaskIcon>
        <TaskIcon label="파일 탐색기" open><path d="M1 2.500h5l1 1.500h8v10H1z" fill="#f0b93a" /><path d="M1 5h14v9H1z" fill="#fbd568" /><path d="M3.500 8.500h9V14H10v-2.500H6V14H3.500z" fill="#3f9ad6" /></TaskIcon>
        <TaskIcon label="PowerShell" open><path d="M3 2h13l-3 12H0z" fill="#3a6fc2" /><path d="M5.500 4.500 9 8l-5 3.500M8.500 11.500h3.500" fill="none" stroke="#fff" strokeWidth="1.300" /></TaskIcon>
        <TaskIcon label="NewWorld" open><rect width="16" height="16" fill="#fff" /><path d="M13 5.500a5.500 5.500 0 1 0 0 5" fill="none" stroke="#c01432" strokeWidth="1.300" /><path d="M4.500 6l1.500 4 1.700-4 1.700 4L11 6M13.500 6v4" fill="none" stroke="#c01432" strokeWidth="1.100" /></TaskIcon>
        <TaskIcon label="AnyDesk" open><rect width="16" height="16" fill="#de3438" /><path d="M6 4.500 9.500 8 6 11.500 2.500 8z" fill="#fff" /><path d="M8.500 4.500 12 8l-3.500 3.500 1.500 0L13.500 8 10 4.500z" fill="#fff" /></TaskIcon>
        <TaskIcon label="메모장" open><path d="M5 2h10l-3 12H1z" fill="#86c5c9" /><path d="M5 2h10l-1 4-11 2z" fill="#c3e4e4" /><path d="M12 14l3-12-6 12z" fill="#438b95" /></TaskIcon>
        <TaskIcon label="Chrome" open><circle cx="8" cy="8" r="7.500" fill="#e2453a" /><path d="M1.500 4.300 6 12l2 3.500A7.500 7.500 0 0 1 1.500 4.300z" fill="#3aa757" /><path d="M14.700 4.700H8L11 9.500 8 15.500a7.500 7.500 0 0 0 6.700-10.800z" fill="#fbc116" /><circle cx="8" cy="8" r="3.500" fill="#fff" /><circle cx="8" cy="8" r="2.800" fill="#4285f4" /></TaskIcon>
        <TaskIcon label="스티커 메모" open active><path d="M0 0h16v16H0z" fill="#fce100" /><path d="M8.500 16V9H16z" fill="#4a4012" /></TaskIcon>
        <TaskIcon label="OBS" open><circle cx="8" cy="7.500" r="7" fill="#222" stroke="#ccc" strokeWidth="1" /><path d="M8 2c-2 2-2 4 .5 5M3 10c2 1 4 .5 5-2M12.500 5C10 5 8.500 6 8.500 8" fill="none" stroke="#ccc" strokeWidth="1.500" /><circle cx="12" cy="12" r="4" fill="#e01822" /></TaskIcon>
      </div>
      <div className="ml-auto flex items-center gap-1 pr-4">
        <ChevronUp className="size-3" />
        <svg viewBox="0 0 12 12" className="size-3" fill="none" stroke="#fff" aria-hidden="true"><path d="M2.500 4h5v6h-5zM7.500 5.500 10 5v4l-2.500-1M3 2c2-1.500 4-1.500 6 0" /></svg>
        <MonitorSmartphone className="size-3" strokeWidth={1.5} />
        <Volume2 className="size-3" strokeWidth={1.5} />
        <span className="pl-0.5 text-[10px]">가</span>
        <time className="ml-1 w-12 text-center text-[9px] leading-3 whitespace-nowrap">오후 5:47<br />2026-08-08</time>
        <svg viewBox="0 0 12 12" className="ml-2 size-3" aria-hidden="true"><path d="M0 0h12v9.500H7L4.500 12V9.500H0z" fill="#fff" /><path d="M2 3h8M2 5h8M2 7h5" stroke="#333" strokeWidth=".8" /></svg>
      </div>
    </footer>
  );
}

export default function App() {
  return (
    <div className={`relative flex h-screen flex-col overflow-hidden bg-[#dcdcdc] ${ui}`}>
      <TitleBar />
      <ConsoleHeader />
      <div className="flex min-h-0 flex-1">
        <BackPanel />
        <div className="mb-[17px] flex w-[373px] shrink-0 flex-col pr-1 pl-px">
          <RoomTable />
          <div className="ml-[157px] h-0.5 w-[52px] shrink-0 bg-black" />
          <LogPanel />
        </div>
      </div>
      <Taskbar />
      <Browser />
      <MemoNote />
      <NoticeNote />
      <div className="pointer-events-none absolute right-[53px] bottom-[60px] text-[#999]/70">
        <p className="text-[14px] leading-[18px]">Windows 정품 인증</p>
        <p className="text-[11px] leading-3">[설정]으로 이동하여 Windows를 정품 인증합니다.</p>
      </div>
      <svg viewBox="0 0 10 15" className="pointer-events-none absolute top-[258px] left-[652px] h-[15px] w-2.5" aria-hidden="true">
        <path d="M1 1v11l2.600-2.300L5.500 14l1.800-.8L5.500 9H9z" fill="#fff" stroke="#222" strokeWidth=".6" />
      </svg>
    </div>
  );
}
